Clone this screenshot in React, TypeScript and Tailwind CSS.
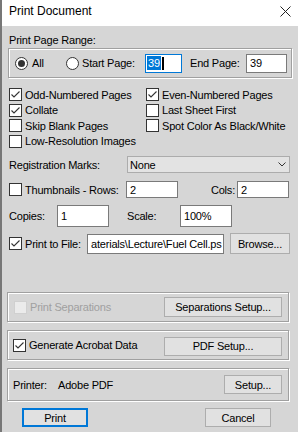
import type { ReactNode } from 'react';
import clsx from 'clsx';

const Check = ({ checked = false, disabled = false }: { checked?: boolean; disabled?: boolean }) => (
  <span
    className={clsx(
      'flex h-[13px] w-[13px] shrink-0 items-center justify-center border',
      disabled ? 'border-[#d0d0d0] bg-[#ebebeb]' : 'border-[#333333] bg-white'
    )}
  >
    {checked && (
      <svg width="11" height="11" viewBox="0 0 11 11">
        <path d="M1.5 5.5 L4 8 L9.5 2.5" fill="none" stroke="#333333" strokeWidth="1.1" />
      </svg>
    )}
  </span>
);

const Radio = ({ checked = false }: { checked?: boolean }) => (
  <span className="flex h-[13px] w-[13px] shrink-0 items-center justify-center rounded-full border border-[#333333] bg-white">
    {checked && <span className="h-[7px] w-[7px] rounded-full bg-[#333333]" />}
  </span>
);

const Field = ({ className, children }: { className: string; children?: ReactNode }) => (
  <div className={clsx('flex items-center border border-[#7a7a7a] bg-white pl-[3px]', className)}>
    {children}
  </div>
);

const Button = ({ className, children }: { className: string; children: ReactNode }) => (
  <div className={clsx('flex items-center justify-center border border-[#adadad] bg-[#e1e1e1]', className)}>
    {children}
  </div>
);

const Group = ({ className, children }: { className: string; children: ReactNode }) => (
  <div
    className={clsx(
      'flex items-center border border-[#a0a0a0] shadow-[inset_1px_1px_0_#ffffff,1px_1px_0_#ffffff]',
      className
    )}
  >
    {children}
  </div>
);

const options = [
  { label: 'Odd-Numbered Pages', checked: true },
  { label: 'Even-Numbered Pages', checked: true },
  { label: 'Collate', checked: true },
  { label: 'Last Sheet First', checked: false },
  { label: 'Skip Blank Pages', checked: false },
  { label: 'Spot Color As Black/White', checked: false },
  { label: 'Low-Resolution Images', checked: false },
];

export default function App() {
  return (
    <div className="flex h-[432px] w-[298px] flex-col overflow-hidden border-l-2 border-[#777777] bg-[#d6d6d6] font-['Liberation_Sans',Arial,sans-serif] text-[11px] leading-[14px] tracking-[-0.2px] text-black">
      {/* title bar */}
      <div className="flex h-[26px] shrink-0 items-center justify-between bg-white pb-[4px] pl-[7px] pr-[7px]">
        <span className="text-[12px] tracking-normal">Print Document</span>
        <svg width="11" height="11" viewBox="0 0 11 11">
          <path d="M0.5 0.5 L10.5 10.5 M10.5 0.5 L0.5 10.5" stroke="#222222" strokeWidth="1" />
        </svg>
      </div>

      <div className="flex flex-col items-start pl-[5px]">
        <span className="ml-[2px] mt-[7px]">Print Page Range:</span>

        <Group className="ml-[1px] mt-[1px] h-[30px] w-[284px] pl-[6px]">
          <div className="flex w-[51px] items-center gap-[4px]">
            <Radio checked />
            <span>All</span>
          </div>
          <div className="flex w-[79px] items-center gap-[3px]">
            <Radio />
            <span>Start Page:</span>
          </div>
          <div className="flex h-[19px] w-[37px] items-center border border-[#0078d7] bg-white pl-[1px]">
            <span className="bg-[#0078d7] px-[1px] text-white">39</span>
            <span className="ml-[1px] h-[13px] w-[2px] bg-black" />
          </div>
          <span className="ml-[8px] w-[56px]">End Page:</span>
          <Field className="h-[19px] w-[41px] pl-[2px]">39</Field>
        </Group>

        <div className="ml-[2px] mt-[9px] grid auto-rows-[15.5px] grid-cols-[137px_auto]">
          {options.map((o) => (
            <div key={o.label} className="flex items-center gap-[3px]">
              <Check checked={o.checked} />
              <span>{o.label}</span>
            </div>
          ))}
        </div>

        <div className="ml-[2px] mt-[7px] flex h-[17px] items-center">
          <span className="w-[118px]">Registration Marks:</span>
          <div className="flex h-[17px] w-[163px] items-center justify-between border border-[#acacac] bg-[#e3e3e3] pl-[2px] pr-[3px]">
            <span>None</span>
            <svg width="8" height="5" viewBox="0 0 8 5">
              <path d="M0.5 0.5 L4 4 L7.5 0.5" fill="none" stroke="#333333" strokeWidth="1" />
            </svg>
          </div>
        </div>

        <div className="ml-[2px] mt-[8px] flex h-[17px] items-center">
          <div className="flex w-[117px] items-center gap-[3px]">
            <Check />
            <span>Thumbnails - Rows:</span>
          </div>
          <Field className="h-[17px] w-[52px]">2</Field>
          <span className="w-[59px] pr-[2px] text-right">Cols:</span>
          <Field className="h-[17px] w-[52px]">2</Field>
        </div>

        <div className="ml-[2px] mt-[7px] flex h-[22px] items-center">
          <span className="w-[48px]">Copies:</span>
          <Field className="h-[22px] w-[52px]">1</Field>
          <span className="w-[71px] pl-[18px]">Scale:</span>
          <Field className="h-[22px] w-[52px]">100%</Field>
        </div>

        <div className="ml-[2px] mt-[6px] flex h-[21px] items-center">
          <div className="flex w-[78px] items-center gap-[3px]">
            <Check checked />
            <span>Print to File:</span>
          </div>
          <Field className="h-[20px] w-[137px] overflow-hidden whitespace-nowrap pl-[1px]">
            aterials\Lecture\Fuel Cell.ps
          </Field>
          <Button className="ml-[6px] h-[21px] w-[60px]">Browse...</Button>
        </div>

        <Group className="mt-[38px] h-[30px] w-[282px] justify-between pl-[6px] pr-[6px]">
          <div className="flex items-center gap-[3px] text-[#a0a0a0]">
            <Check disabled />
            <span>Print Separations</span>
          </div>
          <Button className="h-[20px] w-[118px]">Separations Setup...</Button>
        </Group>

        <Group className="mt-[8px] h-[30px] w-[282px] justify-between pl-[5px] pr-[6px]">
          <div className="flex items-center gap-[3px]">
            <Check checked />
            <span>Generate Acrobat Data</span>
          </div>
          <Button className="mt-[2px] h-[19px] w-[118px]">PDF Setup...</Button>
        </Group>

        <Group className="mt-[8px] h-[33px] w-[282px] pl-[5px] pr-[6px]">
          <span className="w-[45px]">Printer:</span>
          <span>Adobe PDF</span>
          <Button className="ml-auto h-[19px] w-[58px]">Setup...</Button>
        </Group>

        <div className="mt-[7px] flex items-center">
          <div className="ml-[15px] flex h-[19px] w-[66px] items-center justify-center border-2 border-[#0078d7] bg-[#e1e1e1]">
            Print
          </div>
          <Button className="ml-[117px] h-[19px] w-[66px]">Cancel</Button>
        </div>
      </div>
    </div>
  );
}
